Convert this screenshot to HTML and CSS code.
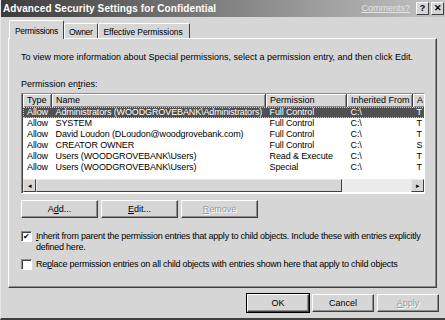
FILE: index.html
```html
<!DOCTYPE html>
<html>
<head>
    <title>Advanced Security Settings for Confidential</title>
    <link rel="stylesheet" href="styles.css">
</head>
<body>
    <div class="window">
        <div class="titlebar">
            <span class="title">Advanced Security Settings for Confidential</span>
            <span class="comments">Comments?</span>
            <span class="tbtn">?</span>
            <span class="tbtn">&#x2715;</span>
        </div>

        <div class="tabs">
            <div class="tab active">Permissions</div>
            <div class="tab">Owner</div>
            <div class="tab">Effective Permissions</div>
        </div>

        <div class="panel">
            <p class="intro">To view more information about Special permissions, select a permission entry, and then click Edit.</p>
            <div class="caption">Permission en<u>t</u>ries:</div>

            <div class="list">
                <table>
                    <thead>
                        <tr>
                            <th class="c-type">Type</th>
                            <th class="c-name">Name</th>
                            <th class="c-perm">Permission</th>
                            <th class="c-inh">Inherited From</th>
                            <th class="c-app">A</th>
                        </tr>
                    </thead>
                    <tbody>
                        <tr class="selected">
                            <td>Allow</td><td>Administrators (WOODGROVEBANK\Administrators)</td><td>Full Control</td><td>C:\</td><td>T</td>
                        </tr>
                        <tr>
                            <td>Allow</td><td>SYSTEM</td><td>Full Control</td><td>C:\</td><td>T</td>
                        </tr>
                        <tr>
                            <td>Allow</td><td>David Loudon (DLoudon@woodgrovebank.com)</td><td>Full Control</td><td>C:\</td><td>T</td>
                        </tr>
                        <tr>
                            <td>Allow</td><td>CREATOR OWNER</td><td>Full Control</td><td>C:\</td><td>S</td>
                        </tr>
                        <tr>
                            <td>Allow</td><td>Users (WOODGROVEBANK\Users)</td><td>Read &amp; Execute</td><td>C:\</td><td>T</td>
                        </tr>
                        <tr>
                            <td>Allow</td><td>Users (WOODGROVEBANK\Users)</td><td>Special</td><td>C:\</td><td>T</td>
                        </tr>
                    </tbody>
                </table>
                <div class="hscroll">
                    <span class="sbtn">&#9666;</span>
                    <span class="thumb"></span>
                    <span class="track"></span>
                    <span class="sbtn">&#9656;</span>
                </div>
            </div>

            <div class="actions">
                <button class="btn">A<u>d</u>d...</button>
                <button class="btn"><u>E</u>dit...</button>
                <button class="btn disabled"><u>R</u>emove</button>
            </div>

            <div class="check first">
                <span class="box">&#10004;</span>
                <span class="check-text"><u>I</u>nherit from parent the permission entries that apply to child objects. Include these with entries explicitly<br>defined here.</span>
            </div>
            <div class="check">
                <span class="box"></span>
                <span class="check-text">Re<u>p</u>lace permission entries on all child objects with entries shown here that apply to child objects</span>
            </div>
        </div>

        <div class="footer">
            <button class="btn wide default">OK</button>
            <button class="btn wide">Cancel</button>
            <button class="btn wide disabled"><u>A</u>pply</button>
        </div>
    </div>
</body>
</html>
```

FILE: styles.css
```css
body {
    margin: 0;
    background: #d6d6d6;
    font-family: "Liberation Sans", Arial, sans-serif;
    font-size: 9px;
    line-height: 11px;
    color: #000;
}
.window {
    width: 445px;
    height: 320px;
    box-sizing: border-box;
    background: #d6d6d6;
    border-left: 1px solid #e8e8e8;
    border-bottom: 2px solid #404040;
}
.titlebar {
    height: 17px;
    display: flex;
    align-items: center;
    padding: 0 1px 0 2px;
    background: linear-gradient(to right, #3c3c3c, #7a7a7a 45%, #c4c4c4);
}
.title {
    flex: 1;
    color: #fff;
    font-weight: bold;
    font-size: 10px;
    letter-spacing: 0.1px;
}
.comments {
    color: #e4e4e4;
    font-size: 9px;
    text-decoration: underline;
    margin-right: 4px;
}
.tbtn {
    width: 11px;
    height: 11px;
    margin-left: 2px;
    background: #d6d6d6;
    border: 1px solid;
    border-color: #fff #404040 #404040 #fff;
    font-weight: bold;
    font-size: 9px;
    line-height: 11px;
    text-align: center;
}
.tabs {
    display: flex;
    align-items: flex-end;
    height: 21px;
    padding-left: 8px;
    font-size: 8.5px;
    letter-spacing: -0.3px;
}
.tab {
    height: 15px;
    box-sizing: border-box;
    padding: 3px 4px 0;
    border: 1px solid;
    border-color: #fff #404040 transparent #fff;
    border-bottom: none;
    border-radius: 2px 2px 0 0;
}
.tab:last-child {
    padding: 3px 6px 0 5px;
    letter-spacing: -0.1px;
}
.tab.active {
    height: 19px;
    padding: 5px 5px 0;
    margin-bottom: -1px;
    position: relative;
    z-index: 1;
    background: #d6d6d6;
}
.panel {
    margin: 0 8px 0 7px;
    height: 250px;
    box-sizing: border-box;
    border: 1px solid;
    border-color: #fff #404040 #404040 #fff;
    box-shadow: inset -1px -1px 0 #8c8c8c;
    padding: 0 8px 0 12px;
}
.intro {
    margin: 13px 0 0;
}
.caption {
    margin-top: 16px;
}
.list {
    margin-top: 3px;
    margin-right: 3px;
    height: 101px;
    box-sizing: border-box;
    border: 1px solid;
    border-color: #8c8c8c #fff #fff #8c8c8c;
    box-shadow: inset 1px 1px 0 #404040;
    background: #fff;
    display: flex;
    flex-direction: column;
    overflow: hidden;
}
table {
    border-collapse: collapse;
    table-layout: fixed;
    width: 420px;
    margin-left: 1px;
}
th {
    font-weight: normal;
    text-align: left;
    height: 13px;
    padding: 0 0 0 4px;
    background: #d6d6d6;
    border-right: 1px solid #404040;
    box-shadow: inset 1px 1px 0 #fff, inset -1px -1px 0 #8c8c8c;
    white-space: nowrap;
    overflow: hidden;
}
td {
    height: 11px;
    padding: 0 0 0 4px;
    white-space: nowrap;
    overflow: hidden;
    letter-spacing: -0.12px;
}
.c-type { width: 24px; }
.c-name { width: 209px; }
.c-perm { width: 76px; }
.c-inh { width: 61px; }
.selected td {
    background: #505050;
    color: #fff;
}
.selected {
    outline: 1px dotted #c8c8c8;
    outline-offset: -1px;
}
.hscroll {
    margin-top: auto;
    display: flex;
    height: 13px;
    background: #ececec;
    margin-bottom: 1px;
    margin-left: 1px;
}
.sbtn, .thumb {
    background: #d6d6d6;
    border: 1px solid;
    border-color: #e8e8e8 #404040 #404040 #e8e8e8;
    box-sizing: border-box;
    height: 13px;
}
.sbtn {
    width: 13px;
    font-size: 7px;
    line-height: 11px;
    text-align: center;
}
.thumb {
    width: 306px;
}
.track {
    flex: 1;
}
.actions {
    display: flex;
    gap: 3px;
    margin-top: 6px;
}
.btn {
    font-family: inherit;
    font-size: 9px;
    color: #000;
    width: 77px;
    height: 18px;
    padding: 0;
    background: #d6d6d6;
    border: 1px solid;
    border-color: #fff #404040 #404040 #fff;
    box-shadow: inset -1px -1px 0 #8c8c8c;
}
.btn.disabled {
    color: #9a9a9a;
    text-shadow: 1px 1px 0 #fff;
}
.check {
    display: flex;
    align-items: flex-start;
    margin-top: 6px;
}
.check.first {
    margin-top: 13px;
}
.check-text {
    letter-spacing: -0.24px;
    white-space: nowrap;
}
.box {
    flex: none;
    width: 11px;
    height: 11px;
    box-sizing: border-box;
    margin: 0 4px 0 0;
    background: #fff;
    border: 1px solid;
    border-color: #8c8c8c #fff #fff #8c8c8c;
    box-shadow: inset 1px 1px 0 #404040;
    font-size: 8px;
    line-height: 10px;
    text-align: center;
}
.footer {
    display: flex;
    justify-content: flex-end;
    gap: 3px;
    padding: 6px 6px 0 0;
}
.btn.wide {
    width: 62px;
}
.btn.default {
    outline: 1px solid #000;
    outline-offset: 0;
}
```
